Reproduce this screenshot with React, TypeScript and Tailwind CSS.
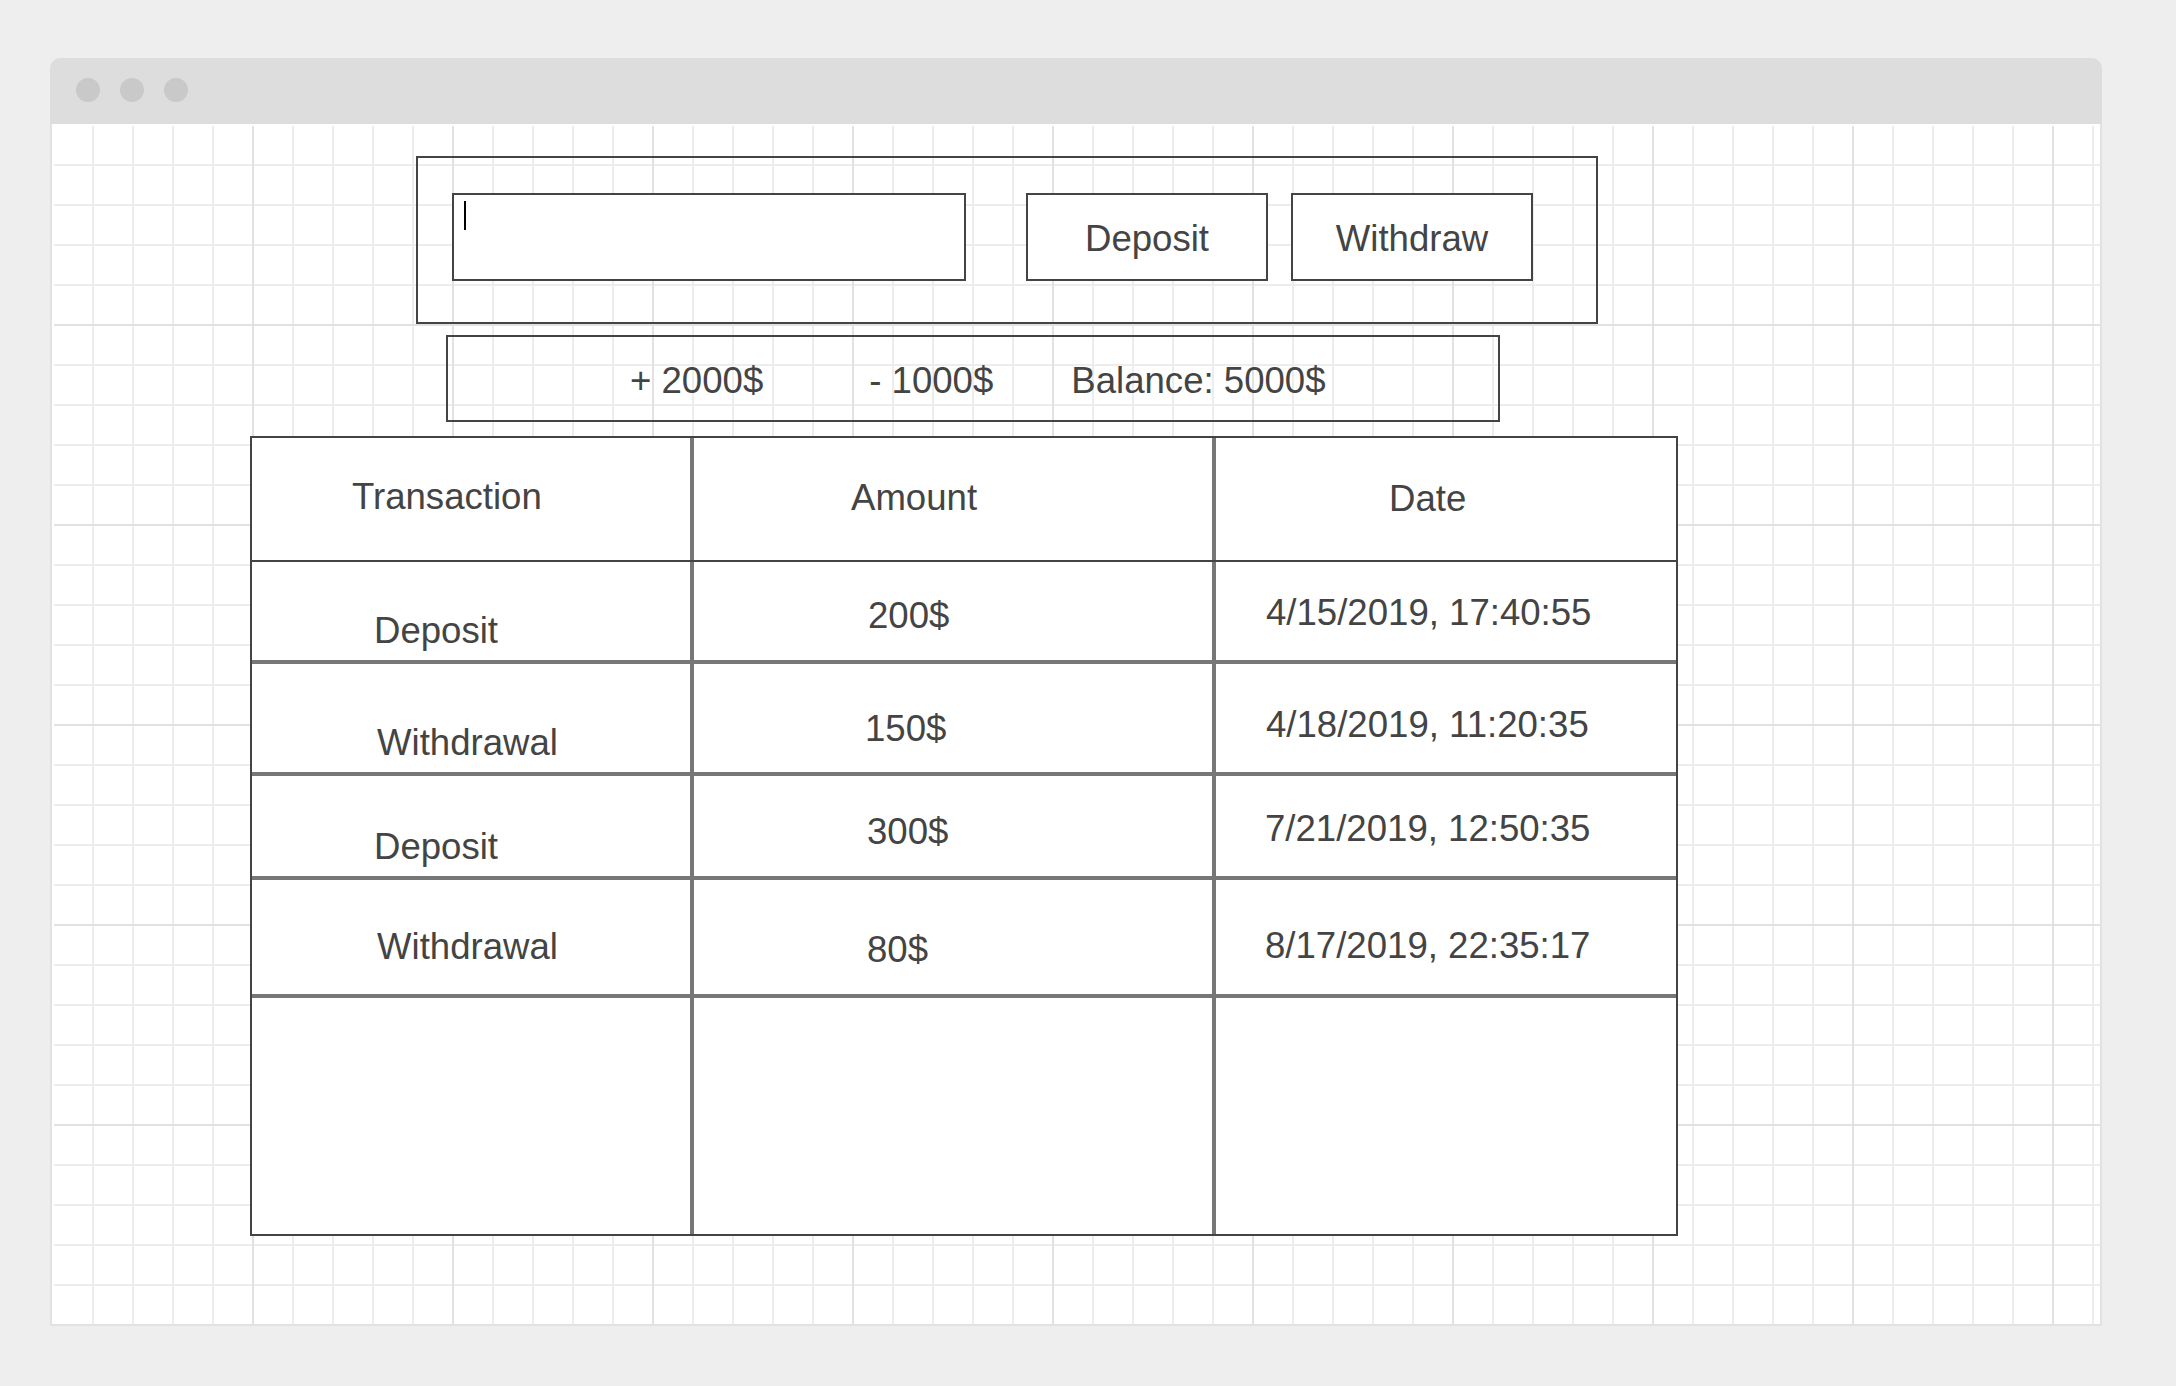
import React from 'react'

// Filas de la tabla: posición del texto ajustada a mano como en el boceto
const rows = [
  {
    h: 'h-[102px]',
    cells: [
      { text: 'Deposit', pad: 'pt-[49px] pl-[122px]' },
      { text: '200$', pad: 'pt-[34px] pl-[174px]' },
      { text: '4/15/2019, 17:40:55', pad: 'pt-[31px] pl-[50px]' },
    ],
  },
  {
    h: 'h-[112px]',
    cells: [
      { text: 'Withdrawal', pad: 'pt-[59px] pl-[125px]' },
      { text: '150$', pad: 'pt-[45px] pl-[171px]' },
      { text: '4/18/2019, 11:20:35', pad: 'pt-[41px] pl-[50px]' },
    ],
  },
  {
    h: 'h-[104px]',
    cells: [
      { text: 'Deposit', pad: 'pt-[51px] pl-[122px]' },
      { text: '300$', pad: 'pt-[36px] pl-[173px]' },
      { text: '7/21/2019, 12:50:35', pad: 'pt-[33px] pl-[49px]' },
    ],
  },
  {
    h: 'h-[118px]',
    cells: [
      { text: 'Withdrawal', pad: 'pt-[47px] pl-[125px]' },
      { text: '80$', pad: 'pt-[50px] pl-[173px]' },
      { text: '8/17/2019, 22:35:17', pad: 'pt-[46px] pl-[49px]' },
    ],
  },
]

const cellWidths = ['w-[438px]', 'w-[522px] border-l-4 border-[#777]', 'w-[464px] border-l-4 border-[#777]']

function WindowDots() {
  return (
    <div className="flex gap-[20px] pl-[26px] pt-[20px]">
      <span className="w-[24px] h-[24px] rounded-full bg-[#c9c9c9]" />
      <span className="w-[24px] h-[24px] rounded-full bg-[#c9c9c9]" />
      <span className="w-[24px] h-[24px] rounded-full bg-[#c9c9c9]" />
    </div>
  )
}

function ActionForm() {
  return (
    <div className="ml-[362px] mt-[30px] w-[1182px] h-[168px] border-2 border-[#444] flex items-start pt-[35px] pl-[34px]">
      {/* campo de monto con cursor */}
      <div className="w-[514px] h-[88px] border-2 border-[#444] bg-white pl-[10px] pt-[6px]">
        <div className="w-[2px] h-[29px] bg-black" />
      </div>
      <button className="ml-[60px] w-[242px] h-[88px] border-2 border-[#444] bg-white flex items-center justify-center pt-[3px]">
        Deposit
      </button>
      <button className="ml-[23px] w-[242px] h-[88px] border-2 border-[#444] bg-white flex items-center justify-center pt-[3px]">
        Withdraw
      </button>
    </div>
  )
}

function Summary() {
  return (
    <div className="ml-[392px] mt-[11px] w-[1054px] h-[87px] border-2 border-[#444] flex items-start pt-[24px] pl-[182px] whitespace-pre">
      <span>+ 2000$</span>
      <span className="ml-[106px]">- 1000$</span>
      <span className="ml-[78px]">Balance: 5000$</span>
    </div>
  )
}

function TransactionsTable() {
  return (
    <div className="ml-[196px] mt-[14px] w-[1428px] h-[800px] border-2 border-[#444] bg-white flex flex-col">
      <div className="h-[124px] flex border-b-2 border-[#444]">
        <div className={`${cellWidths[0]} pt-[39px] pl-[100px]`}>Transaction</div>
        <div className={`${cellWidths[1]} pt-[40px] pl-[157px]`}>Amount</div>
        <div className={`${cellWidths[2]} pt-[41px] pl-[173px]`}>Date</div>
      </div>
      {rows.map((row, i) => (
        <div key={i} className={`${row.h} flex border-b-4 border-[#777]`}>
          {row.cells.map((cell, j) => (
            <div key={j} className={`${cellWidths[j]} ${cell.pad} whitespace-pre`}>
              {cell.text}
            </div>
          ))}
        </div>
      ))}
      <div className="flex-1 flex">
        <div className={cellWidths[0]} />
        <div className={cellWidths[1]} />
        <div className={cellWidths[2]} />
      </div>
    </div>
  )
}

export default function App() {
  return (
    <div className="w-[2176px] h-[1386px] bg-[#eeeeee] pt-[58px] pl-[50px] font-['Liberation_Sans',Arial,sans-serif] text-[36.6px] leading-[40px] text-[#444]">
      <div className="w-[2052px] h-[1268px] flex flex-col rounded-t-[10px] overflow-hidden">
        <div className="h-[66px] bg-[#dddddd] shrink-0">
          <WindowDots />
        </div>
        <div className="flex-1 flex flex-col bg-white border-x-2 border-b-2 border-[#e2e2e2]">
          <div className="flex-1 flex flex-col items-start pl-[2px] pt-[2px] bg-white bg-origin-content bg-clip-content [background-image:linear-gradient(to_right,transparent_198px,#e2e2e2_198px),linear-gradient(to_bottom,transparent_198px,#e2e2e2_198px),linear-gradient(to_right,transparent_38px,#ededed_38px),linear-gradient(to_bottom,transparent_38px,#ededed_38px)] [background-size:200px_200px,200px_200px,40px_40px,40px_40px]">
            <ActionForm />
            <Summary />
            <TransactionsTable />
          </div>
        </div>
      </div>
    </div>
  )
}
